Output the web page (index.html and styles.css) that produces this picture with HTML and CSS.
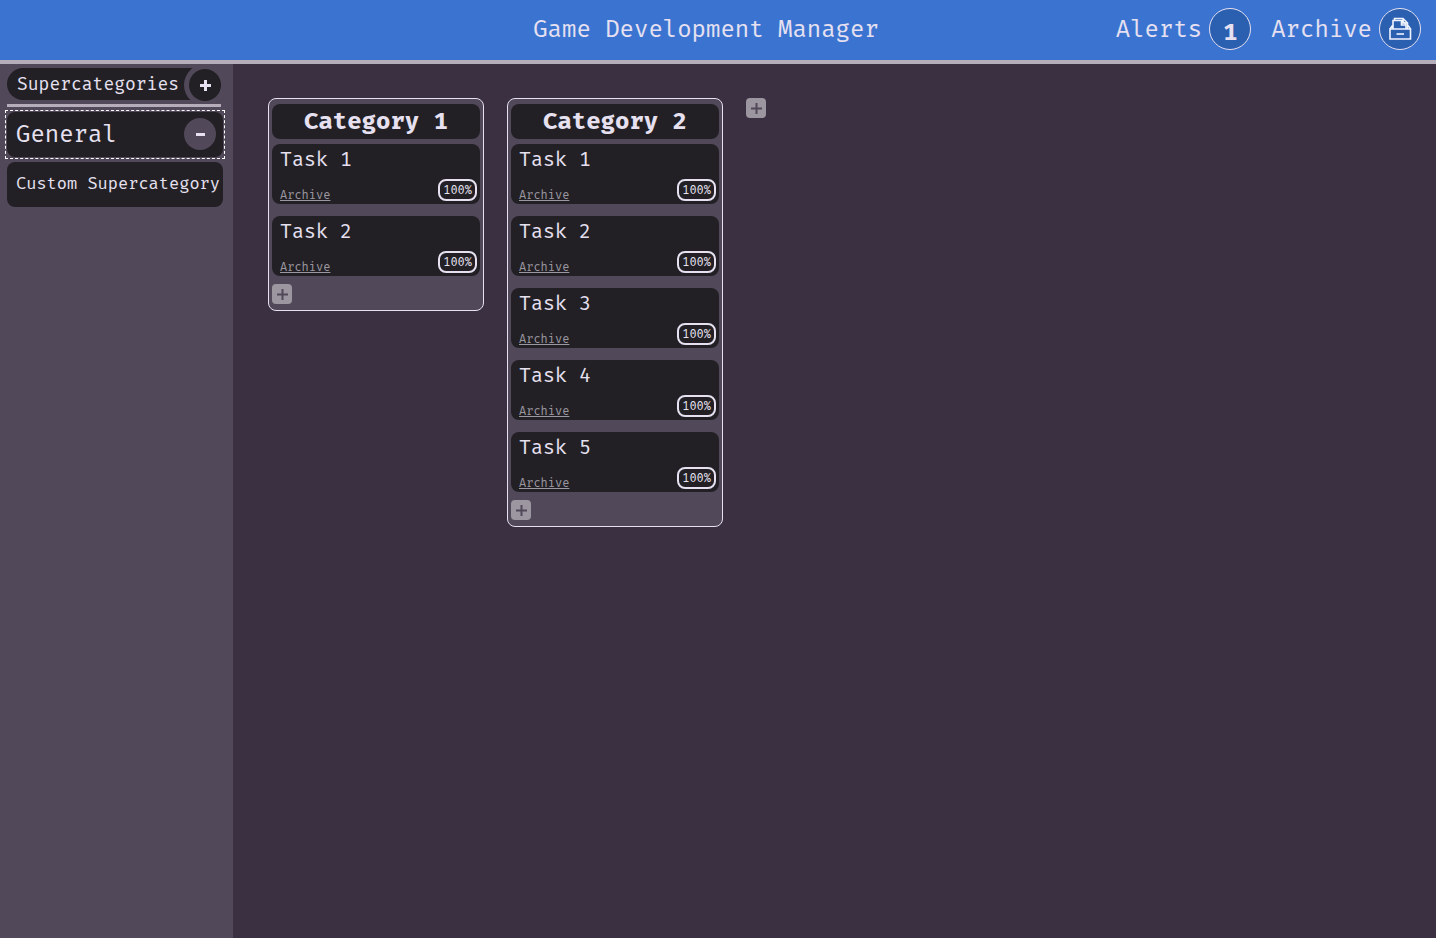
FILE: index.html
```html
<!DOCTYPE html>
<html lang="en">
<head>
<meta charset="utf-8">
<meta name="viewport" content="width=device-width, initial-scale=1">
<title>Game Development Manager</title>
<link rel="stylesheet" href="styles.css">
</head>
<body>
<header class="topbar">
  <h1 class="topbar-title">Game Development Manager</h1>
  <nav class="topbar-nav">
    <button class="nav-item" type="button">Alerts <span class="nav-circle nav-count">1</span></button>
    <button class="nav-item" type="button">Archive
      <span class="nav-circle">
        <svg width="24" height="24" viewBox="0 0 24 24" fill="none" stroke="#f0f4ff" stroke-width="1.600" aria-hidden="true">
          <path d="M2 12h20.500v10H2z"/>
          <path d="M2 12l2.500-3.500M22.500 12l-2.500-3.500M5 12V3.500h9l4 4V12"/>
          <path d="M6.500 3.500V1.500H15l4.500 4.500v6M13.500 3.500V8H18M15 1.500V6h4.500"/>
          <path d="M8.500 17h7.500"/>
        </svg>
      </span>
    </button>
  </nav>
</header>
<div class="layout">
  <aside class="sidebar">
    <div class="side-head">
      <h2 class="side-title">Supercategories</h2>
      <button class="round-button side-add" type="button" aria-label="Add supercategory"><svg width="12" height="12" viewBox="0 0 12 12" aria-hidden="true"><path d="M5 1h3v4h4v3H8v4H5V8H1V5h4z" fill="currentColor"/></svg></button>
    </div>
    <ul class="side-list">
      <li class="super-frame super-frame-active">
        <div class="super">
          <button class="super-name super-name-large" type="button">General</button>
          <button class="round-button super-remove" type="button" aria-label="Remove General"><svg width="10" height="4" viewBox="0 0 10 4" aria-hidden="true"><path d="M1 1h9v3H1z" fill="currentColor"/></svg></button>
        </div>
      </li>
      <li class="super-frame">
        <div class="super">
          <button class="super-name" type="button">Custom Supercategory</button>
        </div>
      </li>
    </ul>
  </aside>
  <main class="board">
    <section class="category">
      <h2 class="category-title">Category 1</h2>
      <ul class="tasks">
        <li class="task"><h3 class="task-title">Task 1</h3><button class="task-archive" type="button">Archive</button><span class="task-progress">100%</span></li>
        <li class="task"><h3 class="task-title">Task 2</h3><button class="task-archive" type="button">Archive</button><span class="task-progress">100%</span></li>
      </ul>
      <button class="add" type="button" aria-label="Add task"><svg width="12" height="12" viewBox="0 0 12 12" aria-hidden="true"><path d="M6.500 1v11M1 6.500h11" stroke="currentColor" stroke-width="2"/></svg></button>
    </section>
    <section class="category">
      <h2 class="category-title">Category 2</h2>
      <ul class="tasks">
        <li class="task"><h3 class="task-title">Task 1</h3><button class="task-archive" type="button">Archive</button><span class="task-progress">100%</span></li>
        <li class="task"><h3 class="task-title">Task 2</h3><button class="task-archive" type="button">Archive</button><span class="task-progress">100%</span></li>
        <li class="task"><h3 class="task-title">Task 3</h3><button class="task-archive" type="button">Archive</button><span class="task-progress">100%</span></li>
        <li class="task"><h3 class="task-title">Task 4</h3><button class="task-archive" type="button">Archive</button><span class="task-progress">100%</span></li>
        <li class="task"><h3 class="task-title">Task 5</h3><button class="task-archive" type="button">Archive</button><span class="task-progress">100%</span></li>
      </ul>
      <button class="add" type="button" aria-label="Add task"><svg width="12" height="12" viewBox="0 0 12 12" aria-hidden="true"><path d="M6.500 1v11M1 6.500h11" stroke="currentColor" stroke-width="2"/></svg></button>
    </section>
    <button class="add" type="button" aria-label="Add category"><svg width="12" height="12" viewBox="0 0 12 12" aria-hidden="true"><path d="M6.500 1v11M1 6.500h11" stroke="currentColor" stroke-width="2"/></svg></button>
  </main>
</div>
</body>
</html>
```
FILE: styles.css
```css
:root {
  --text: #e6e0f0;
  --card: #222024;
  --panel: #514859;
  --line: #b5adba;
}

* { box-sizing: border-box; }

body {
  margin: 0;
  min-height: 100vh;
  display: flex;
  flex-direction: column;
  background: #3a3042;
  color: var(--text);
  font-family: "Fira Mono", "DejaVu Sans Mono", "Liberation Mono", monospace;
}

h1, h2, h3, ul { margin: 0; padding: 0; font-weight: 400; }
ul { list-style: none; }

button {
  padding: 0;
  border: 0;
  background: none;
  color: inherit;
  font: inherit;
  cursor: pointer;
}

svg { display: block; overflow: visible; }

.topbar {
  display: grid;
  grid-template-columns: 1fr auto 1fr;
  align-items: center;
  min-height: 64px;
  padding: 0 15px 2px;
  border-bottom: 4px solid var(--line);
  background: #3a74d0;
}

.topbar-title {
  grid-column: 2;
  margin-right: 24px;
  font-size: 24px;
  line-height: 32px;
}

.topbar-nav {
  display: flex;
  justify-content: flex-end;
  gap: 20px;
}

.nav-item {
  display: flex;
  align-items: center;
  gap: 7px;
  font-size: 24px;
  line-height: 32px;
}

.nav-circle {
  display: flex;
  align-items: center;
  justify-content: center;
  width: 42px;
  height: 42px;
  border: 1px solid var(--text);
  border-radius: 50%;
  background: #2b5fb0;
}

.nav-count { padding-top: 5px; font-weight: 700; }

.layout { display: flex; flex: 1; }

.sidebar {
  flex: 0 0 233px;
  min-width: 0;
  padding: 4px 10px 4px 7px;
  background: var(--panel);
}

.side-head {
  display: flex;
  align-items: flex-start;
  margin-right: 2px;
  padding-bottom: 3px;
  border-bottom: 3px solid var(--line);
  overflow: hidden;
}

.side-title {
  flex: 1;
  min-width: 0;
  margin-right: -6px;
  padding-left: 10px;
  border-radius: 16px 0 0 16px;
  background: var(--card);
  font-size: 18px;
  line-height: 32px;
}

.round-button {
  display: flex;
  align-items: center;
  justify-content: center;
  flex: none;
  width: 32px;
  height: 32px;
  border-radius: 50%;
}

.side-add {
  margin-top: 1px;
  background: var(--card);
  box-shadow: 0 0 0 5px var(--panel);
}

.side-list {
  display: flex;
  flex-direction: column;
  gap: 1px;
  margin: 0 -2px;
  padding-top: 3px;
}

.super-frame {
  padding: 1px;
  border: 1px solid transparent;
}

.super-frame-active { border: 1px dashed #fff; }

.super {
  display: flex;
  align-items: center;
  min-height: 45px;
  padding: 0 7px 2px 9px;
  border-radius: 8px;
  background: var(--card);
}

.super-name {
  flex: 1;
  min-width: 0;
  font-size: 17px;
  line-height: 34px;
  text-align: left;
  white-space: nowrap;
}

.super-name-large { font-size: 24px; }

.super-remove { background: var(--panel); }

.board {
  display: flex;
  flex: 1;
  flex-wrap: wrap;
  align-items: flex-start;
  align-content: flex-start;
  gap: 23px;
  padding: 34px 35px;
}

.category {
  width: 216px;
  padding: 5px 3px 6px;
  border: 1px solid var(--text);
  border-radius: 8px;
  background: var(--panel);
}

.category-title {
  margin-bottom: 5px;
  border-radius: 8px;
  background: var(--card);
  font-size: 24px;
  font-weight: 700;
  line-height: 35px;
  text-align: center;
}

.tasks {
  display: flex;
  flex-direction: column;
  gap: 12px;
  margin-bottom: 8px;
}

.task {
  display: grid;
  grid-template-columns: 1fr auto;
  grid-template-rows: 1fr auto;
  min-height: 60px;
  padding: 0 3px 3px 8px;
  border-radius: 8px;
  background: var(--card);
}

.task-title {
  grid-column: 1 / -1;
  font-size: 20px;
  line-height: 30px;
}

.task-archive {
  align-self: end;
  justify-self: start;
  color: #9c98a1;
  font-size: 12px;
  line-height: 12px;
  text-decoration: underline;
}

.task-progress {
  padding: 0 3px;
  border: 2px solid var(--text);
  border-radius: 8px;
  font-size: 12px;
  line-height: 18px;
}

.add {
  display: flex;
  align-items: center;
  justify-content: center;
  width: 20px;
  height: 20px;
  border-radius: 4px;
  background: #9b969f;
  color: var(--panel);
}
```
